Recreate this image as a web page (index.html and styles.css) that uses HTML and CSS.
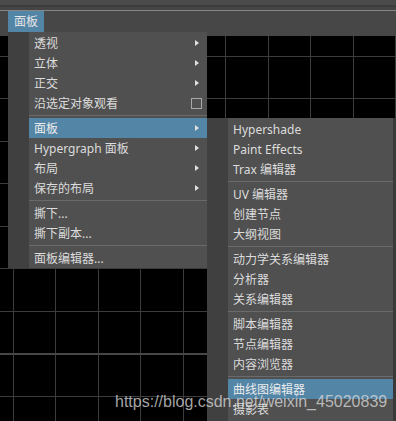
FILE: index.html
```html
<!DOCTYPE html>
<html lang="zh-CN">
<head>
    <meta charset="UTF-8">
    <meta name="viewport" content="width=device-width, initial-scale=1.0">
    <title>面板菜单</title>
    <link rel="stylesheet" href="styles.css">
</head>
<body>
    <div class="topstrip"></div>
    <div class="menubar">
        <span class="menubar-item active">面板</span>
    </div>
    <div class="viewport">
        <svg class="grid" width="396" height="385" shape-rendering="crispEdges">
            <g stroke="#3c3c3c" stroke-width="1">
                <line x1="13.5" y1="0" x2="13.5" y2="385"/>
                <line x1="55.5" y1="0" x2="55.5" y2="385"/>
                <line x1="98.5" y1="0" x2="98.5" y2="385"/>
                <line x1="140.5" y1="0" x2="140.5" y2="385"/>
                <line x1="183.5" y1="0" x2="183.5" y2="385"/>
                <line x1="225.5" y1="0" x2="225.5" y2="385"/>
                <line x1="268.5" y1="0" x2="268.5" y2="385"/>
                <line x1="310.5" y1="0" x2="310.5" y2="385"/>
                <line x1="353.5" y1="0" x2="353.5" y2="385"/>
                <line x1="395.5" y1="0" x2="395.5" y2="385"/>
                <line x1="0" y1="20.5" x2="396" y2="20.5"/>
                <line x1="0" y1="62.5" x2="396" y2="62.5"/>
                <line x1="0" y1="105.5" x2="396" y2="105.5"/>
                <line x1="0" y1="147.5" x2="396" y2="147.5"/>
                <line x1="0" y1="190.5" x2="396" y2="190.5"/>
                <line x1="0" y1="232.5" x2="396" y2="232.5"/>
                <line x1="0" y1="275.5" x2="396" y2="275.5"/>
                <line x1="0" y1="360.5" x2="396" y2="360.5"/>
            </g>
            <line x1="0" y1="318" x2="396" y2="318" stroke="#474747" stroke-width="2"/>
        </svg>
    </div>

    <!-- main panel menu -->
    <div class="menu main-menu">
        <div class="item"><span>透视</span><span class="arrow"></span></div>
        <div class="item"><span>立体</span><span class="arrow"></span></div>
        <div class="item"><span>正交</span><span class="arrow"></span></div>
        <div class="item"><span>沿选定对象观看</span><span class="check"></span></div>
        <div class="sep"></div>
        <div class="item active"><span>面板</span><span class="arrow"></span></div>
        <div class="item"><span>Hypergraph 面板</span><span class="arrow"></span></div>
        <div class="item"><span>布局</span><span class="arrow"></span></div>
        <div class="item"><span>保存的布局</span><span class="arrow"></span></div>
        <div class="sep"></div>
        <div class="item"><span>撕下...</span></div>
        <div class="item"><span>撕下副本...</span></div>
        <div class="sep"></div>
        <div class="item"><span>面板编辑器...</span></div>
    </div>

    <!-- panel submenu -->
    <div class="menu sub-menu">
        <div class="item"><span>Hypershade</span></div>
        <div class="item"><span>Paint Effects</span></div>
        <div class="item"><span>Trax 编辑器</span></div>
        <div class="sep"></div>
        <div class="item"><span>UV 编辑器</span></div>
        <div class="item"><span>创建节点</span></div>
        <div class="item"><span>大纲视图</span></div>
        <div class="sep"></div>
        <div class="item"><span>动力学关系编辑器</span></div>
        <div class="item"><span>分析器</span></div>
        <div class="item"><span>关系编辑器</span></div>
        <div class="sep"></div>
        <div class="item"><span>脚本编辑器</span></div>
        <div class="item"><span>节点编辑器</span></div>
        <div class="item"><span>内容浏览器</span></div>
        <div class="sep"></div>
        <div class="item active"><span>曲线图编辑器</span></div>
        <div class="item"><span>摄影表</span></div>
    </div>

    <div class="watermark">https://blog.csdn.net/weixin_45020839</div>
</body>
</html>
```

FILE: styles.css
```css
body {
    margin: 0;
    width: 396px;
    height: 421px;
    overflow: hidden;
    background: #444444;
    font-family: "Noto Sans", "Noto Sans CJK SC", sans-serif;
    font-size: 12px;
    color: #dcdcdc;
    position: relative;
}
.topstrip {
    height: 10px;
    background: linear-gradient(to bottom, #4a4a4a 0, #4a4a4a 5px, #3c3c3c 5px, #3c3c3c 7px, #454545 7px);
}
.menubar {
    height: 25px;
    border-top: 1px solid #858585;
    background: #474747;
    display: flex;
    padding-left: 8px;
}
.menubar-item {
    height: 21px;
    line-height: 21px;
    padding: 0 6px;
}
.menubar-item.active {
    background: #5285a6;
    color: #e6e6e6;
}
.viewport {
    height: 385px;
    background: #000000;
}
.grid {
    display: block;
}
.menu {
    position: absolute;
    background: linear-gradient(to right, #404040 21px, #505050 21px);
    padding-top: 1px;
}
.main-menu {
    left: 8px;
    top: 32px;
    width: 199px;
    height: 235px;
}
.sub-menu {
    left: 207px;
    top: 118px;
    width: 186px;
    height: 310px;
    box-shadow: 3px 0 0 #3a3a3a;
}
.item {
    margin-left: 21px;
    height: 20px;
    padding: 0 8px 0 5px;
    display: flex;
    align-items: center;
    justify-content: space-between;
    white-space: nowrap;
}
.sub-menu .item {
    padding-left: 5px;
}
.item.active {
    background: #5285a6;
    color: #ececec;
}
.sep {
    margin: 2px 0 2px 21px;
    height: 1px;
    background: #6a6a6a;
}
.arrow {
    width: 0;
    height: 0;
    border-left: 4px solid #e0e0e0;
    border-top: 3.5px solid transparent;
    border-bottom: 3.5px solid transparent;
}
.check {
    width: 9px;
    height: 9px;
    border: 1px solid #a8a8a8;
    margin-right: -3px;
}
.watermark {
    position: absolute;
    left: 115px;
    top: 393px;
    font-family: "Liberation Sans", Arial, sans-serif;
    font-size: 16px;
    line-height: 18px;
    color: rgba(220, 220, 220, 0.75);
    white-space: nowrap;
}
```
